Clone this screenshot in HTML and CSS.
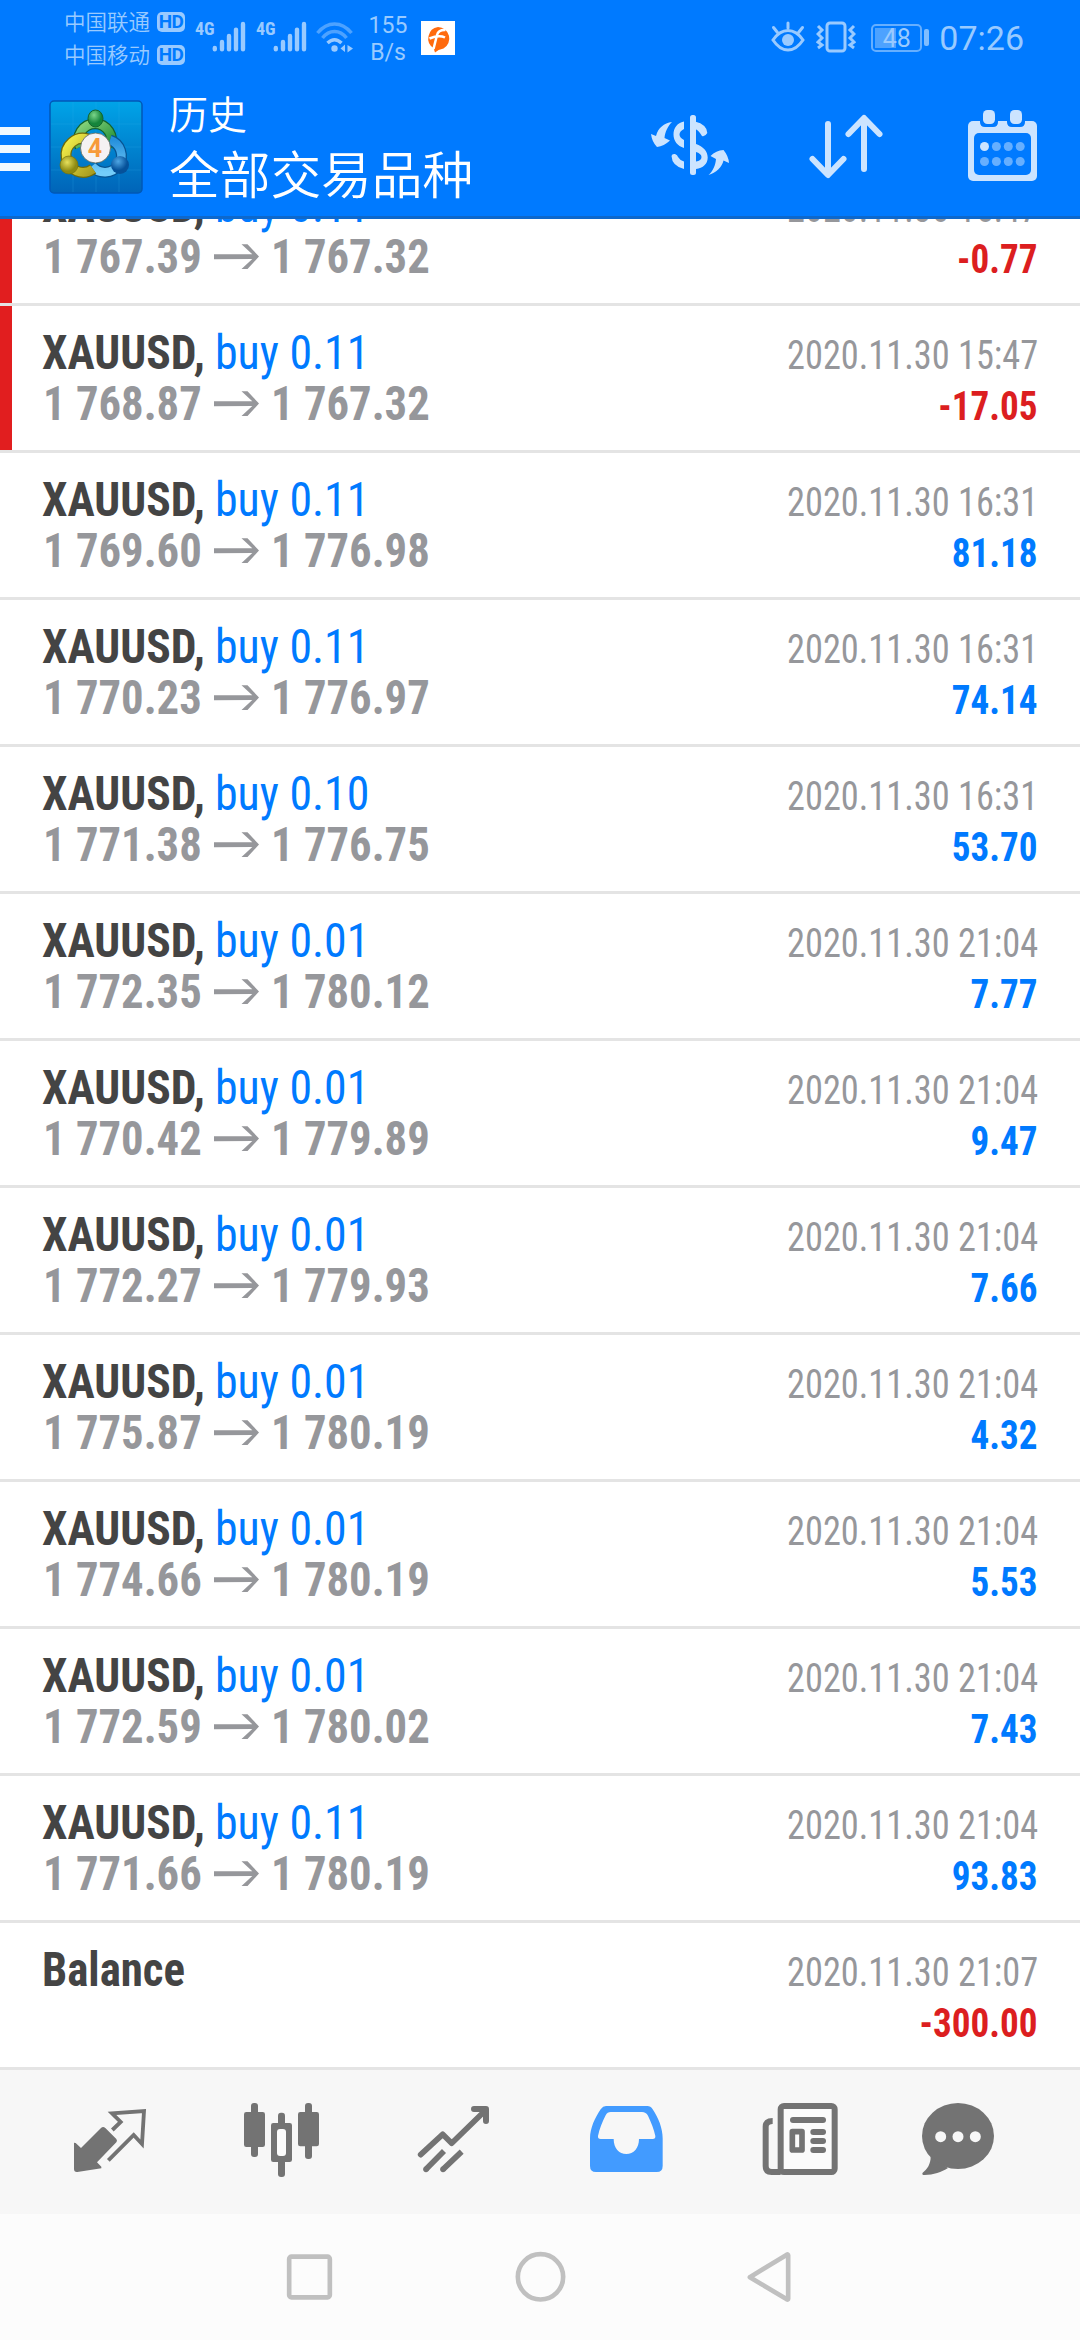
FILE: index.html
```html
<!DOCTYPE html>
<html lang="zh-CN">
<head>
<meta charset="utf-8">
<title>历史</title>
<link rel="stylesheet" href="styles.css">
</head>
<body>
<div class="screen">
<header class="top">
  <div class="status">
    <div class="carriers">
      <div class="carrier"><span>中国联通</span><b class="hd">HD</b></div>
      <div class="carrier"><span>中国移动</span><b class="hd">HD</b></div>
    </div>
    <div class="signal"><span class="gen">4G</span><svg width="34" height="32" viewBox="0 0 34 32"><path d="M2.8 27v1.2M10 21v7.2M17 15v13.2M24 8.600v19.600M31 3v25.200"/></svg></div>
    <div class="signal"><span class="gen">4G</span><svg width="34" height="32" viewBox="0 0 34 32"><path d="M2.800 27v1.200M10 21v7.200M17 15v13.200M24 8.600v19.600M31 3v25.200"/></svg></div>
    <svg class="wifi" width="38" height="32" viewBox="0 0 38 32" fill="none" stroke="#99caff" stroke-width="3.500">
      <path d="M1.500 12Q9 3 18.500 3T35.500 12M6.500 17Q11.500 10.500 18.500 10.500T30.500 17" stroke="#4da2ff"/>
      <path d="M11.500 22Q18.500 15.500 25.500 22"/>
      <circle cx="18.500" cy="27.500" r="3.200" fill="#99caff" stroke="none"/>
      <path d="M29 23.500v7.500L24.500 27.500zM31.500 24v7.500L37 27.500z" fill="#99caff" stroke="none"/>
    </svg>
    <div class="speed">155<br>B/s</div>
    <svg class="notice" width="34" height="34" viewBox="0 0 34 34">
      <rect width="34" height="34" fill="#fff"/>
      <path d="M17 6a11.500 11.500 0 0 1 5.500 21.500Q17 28.500 14 31.500L12.500 27A11.500 11.500 0 0 1 17 6z" fill="#ff6a0d"/>
      <path d="M12.500 28L16 14Q17.500 8.500 24.500 9M8.500 17.500Q18 13.500 24 16.500" fill="none" stroke="#fff" stroke-width="2.500"/>
    </svg>
    <div class="status-right">
      <svg width="34" height="32" viewBox="0 0 34 32" fill="none" stroke="#99caff" stroke-width="3">
        <path d="M2 19Q8.500 9.500 17 9.500T32 19Q25.500 29 17 29T2 19z"/><circle cx="17" cy="19" r="6" fill="#99caff" stroke="none"/>
        <path d="M17 2v5M2.500 6.500l4 5M31.500 6.500l-4 5" stroke-linecap="round"/>
      </svg>
      <svg class="vibrate" width="40" height="32" viewBox="0 0 40 32" fill="none" stroke="#99caff" stroke-width="3">
        <rect x="11" y="2" width="18" height="28" rx="3"/>
        <path d="M2 5l4 4-4 4 4 4-4 4 4 3-4 3M38 5l-4 4 4 4-4 4 4 4-4 3 4 3"/>
      </svg>
      <div class="battery"><span>48</span></div><i class="nub"></i>
      <span class="clock">07:26</span>
    </div>
  </div>
  <div class="appbar">
    <div class="menu"><i></i><i></i><i></i></div>
    <svg class="logo" width="94" height="94" viewBox="-1 -1 94 94">
      <defs>
        <linearGradient id="tile" x1="0" y1="0" x2="0" y2="1"><stop offset="0" stop-color="#00a4e8"/><stop offset="1" stop-color="#0064b8"/></linearGradient>
        <linearGradient id="green" x1="0" y1="0" x2="1" y2="1"><stop offset="0" stop-color="#8bd67d"/><stop offset="1" stop-color="#1b8a33"/></linearGradient>
        <linearGradient id="yellow" x1="0" y1="0" x2="1" y2="1"><stop offset="0" stop-color="#f4f04a"/><stop offset="1" stop-color="#a89c20"/></linearGradient>
        <linearGradient id="blue" x1="0" y1="0" x2="0" y2="1"><stop offset="0" stop-color="#2590dc"/><stop offset="1" stop-color="#75cdfa"/></linearGradient>
        <radialGradient id="gh" cx=".4" cy=".3"><stop offset="0" stop-color="#7bd58a"/><stop offset="1" stop-color="#15853b"/></radialGradient>
        <radialGradient id="yh" cx=".4" cy=".35"><stop offset="0" stop-color="#e6e05c"/><stop offset="1" stop-color="#8d8a12"/></radialGradient>
        <radialGradient id="bh" cx=".4" cy=".3"><stop offset="0" stop-color="#4fa6e4"/><stop offset="1" stop-color="#05519a"/></radialGradient>
      </defs>
      <rect width="92" height="92" rx="4" fill="url(#tile)" stroke="#0058b6" stroke-width="1.500"/>
      <path d="M23 1v90M46 1v90M69 1v90M1 23h90M1 46h90M1 69h90" stroke="#3bb4f0" stroke-width=".6" opacity=".35"/>
      <g fill="none">
        <path d="M30 46A16.500 16.500 0 1 1 60 46" stroke="#14632b" stroke-width="11"/><path d="M30 46A16.500 16.500 0 1 1 60 46" stroke="url(#green)" stroke-width="8.500"/>
        <path d="M60 39A16.500 16.500 0 1 1 42 65" stroke="#075492" stroke-width="11"/><path d="M60 39A16.500 16.500 0 1 1 42 65" stroke="url(#blue)" stroke-width="8.500"/>
        <path d="M38 38A17 17 0 1 0 43 68" stroke="#6f6a0a" stroke-width="11"/><path d="M38 38A17 17 0 1 0 43 68" stroke="url(#yellow)" stroke-width="8.500"/>
      </g>
      <ellipse cx="45.500" cy="17.500" rx="7.500" ry="8.500" fill="url(#gh)" stroke="#14632b"/>
      <circle cx="19" cy="64" r="9" fill="url(#yh)" stroke="#77740c" stroke-width=".7"/>
      <circle cx="70" cy="64" r="9" fill="url(#bh)"/>
      <circle cx="45.500" cy="47" r="15" fill="#f5f2f3" stroke="#5d6659" stroke-width=".8"/>
      <text x="45" y="56" class="four">4</text>
    </svg>
    <div class="titles"><div class="title">历史</div><div class="subtitle">全部交易品种</div></div>
    <div class="actions">
      <svg width="100" height="90" viewBox="640 100 100 90" fill="#cce4ff">
        <rect x="690" y="115" width="6" height="60" rx="2.500"/>
        <path d="M684 121.500C677 123 673.500 128 673.500 134.500S677.500 146 684 148V140C681 138.500 679.500 136.500 679.500 134.500S681 130.500 684 129ZM696 144C703 146.500 707.700 151 707.700 157.500S703 168 696 169V161.500C699.500 161 701.500 159.500 701.500 157S699 153 696 152Z"/>
        <path d="M671.500 156Q672 153.500 675 154Q677.500 155 678 157Q680 160.500 684 161.500V169Q672 166 671.500 156ZM695 121.500Q707 124.500 707.300 133Q705 137 702 136Q698.500 130 695 129Z"/>
        <path d="M672 122C664 123 658 128 656 136L651 134Q652 142 657 147Q664 146 670 140.500L664.500 138C665 132 668 126 672 122ZM708.500 175C713 171 715.500 165 716 159L710.500 156Q716 150.500 723.500 150Q728.500 156 729 163L723.500 160.500C722 167 716 173 708.500 175Z"/>
      </svg>
      <svg width="100" height="90" viewBox="796 100 100 90" fill="none" stroke="#cce4ff" stroke-width="6" stroke-linecap="round" stroke-linejoin="round"><path d="M828 124V174M812.500 159L828 175L843.500 159M864 169V119M848.500 134L864 118L879.500 134"/></svg>
      <svg width="100" height="90" viewBox="952 100 100 90" fill="#cce4ff">
        <rect x="968" y="121" width="69" height="60" rx="5"/>
        <rect x="974" y="133" width="57" height="42" rx="5" fill="#007aff"/>
        <path d="M980 120h18v2q0 5-5 5h-8q-5 0-5-5zM1007 120h18v2q0 5-5 5h-8q-5 0-5-5z" fill="#007aff"/>
        <rect x="983" y="110" width="12" height="14" rx="4.500"/><rect x="1010" y="110" width="12" height="14" rx="4.500"/>
        <circle cx="984.500" cy="146.500" r="4.500"/>
        <g fill="#66afff"><circle cx="996.400" cy="146.500" r="4.500"/><circle cx="1008.300" cy="146.500" r="4.500"/><circle cx="1020.200" cy="146.500" r="4.500"/><circle cx="984.500" cy="161.500" r="4.500"/><circle cx="996.400" cy="161.500" r="4.500"/><circle cx="1008.300" cy="161.500" r="4.500"/><circle cx="1020.200" cy="161.500" r="4.500"/></g>
      </svg>
    </div>
  </div>
</header>
<svg width="0" height="0" class="defs"><symbol id="arrow" viewBox="0 0 45 25"><path d="M0 10.300L38.300 10.300L27.500 .3H33.500L45 12.500L33.500 24.900H27.500L38.300 14.900L0 15.200Z" fill="#96979b"/></symbol></svg>
<main class="list">
  <div class="row loss"><div class="deal"><div class="head"><b>XAUUSD,</b> <span class="buy">buy 0.11</span></div><div class="prices"><span>1 767.39</span><svg class="arrow"><use href="#arrow"/></svg><span>1 767.32</span></div></div><div class="result"><div class="date">2020.11.30 15:47</div><div class="profit neg">-0.77</div></div></div>
  <div class="row loss"><div class="deal"><div class="head"><b>XAUUSD,</b> <span class="buy">buy 0.11</span></div><div class="prices"><span>1 768.87</span><svg class="arrow"><use href="#arrow"/></svg><span>1 767.32</span></div></div><div class="result"><div class="date">2020.11.30 15:47</div><div class="profit neg">-17.05</div></div></div>
  <div class="row"><div class="deal"><div class="head"><b>XAUUSD,</b> <span class="buy">buy 0.11</span></div><div class="prices"><span>1 769.60</span><svg class="arrow"><use href="#arrow"/></svg><span>1 776.98</span></div></div><div class="result"><div class="date">2020.11.30 16:31</div><div class="profit">81.18</div></div></div>
  <div class="row"><div class="deal"><div class="head"><b>XAUUSD,</b> <span class="buy">buy 0.11</span></div><div class="prices"><span>1 770.23</span><svg class="arrow"><use href="#arrow"/></svg><span>1 776.97</span></div></div><div class="result"><div class="date">2020.11.30 16:31</div><div class="profit">74.14</div></div></div>
  <div class="row"><div class="deal"><div class="head"><b>XAUUSD,</b> <span class="buy">buy 0.10</span></div><div class="prices"><span>1 771.38</span><svg class="arrow"><use href="#arrow"/></svg><span>1 776.75</span></div></div><div class="result"><div class="date">2020.11.30 16:31</div><div class="profit">53.70</div></div></div>
  <div class="row"><div class="deal"><div class="head"><b>XAUUSD,</b> <span class="buy">buy 0.01</span></div><div class="prices"><span>1 772.35</span><svg class="arrow"><use href="#arrow"/></svg><span>1 780.12</span></div></div><div class="result"><div class="date">2020.11.30 21:04</div><div class="profit">7.77</div></div></div>
  <div class="row"><div class="deal"><div class="head"><b>XAUUSD,</b> <span class="buy">buy 0.01</span></div><div class="prices"><span>1 770.42</span><svg class="arrow"><use href="#arrow"/></svg><span>1 779.89</span></div></div><div class="result"><div class="date">2020.11.30 21:04</div><div class="profit">9.47</div></div></div>
  <div class="row"><div class="deal"><div class="head"><b>XAUUSD,</b> <span class="buy">buy 0.01</span></div><div class="prices"><span>1 772.27</span><svg class="arrow"><use href="#arrow"/></svg><span>1 779.93</span></div></div><div class="result"><div class="date">2020.11.30 21:04</div><div class="profit">7.66</div></div></div>
  <div class="row"><div class="deal"><div class="head"><b>XAUUSD,</b> <span class="buy">buy 0.01</span></div><div class="prices"><span>1 775.87</span><svg class="arrow"><use href="#arrow"/></svg><span>1 780.19</span></div></div><div class="result"><div class="date">2020.11.30 21:04</div><div class="profit">4.32</div></div></div>
  <div class="row"><div class="deal"><div class="head"><b>XAUUSD,</b> <span class="buy">buy 0.01</span></div><div class="prices"><span>1 774.66</span><svg class="arrow"><use href="#arrow"/></svg><span>1 780.19</span></div></div><div class="result"><div class="date">2020.11.30 21:04</div><div class="profit">5.53</div></div></div>
  <div class="row"><div class="deal"><div class="head"><b>XAUUSD,</b> <span class="buy">buy 0.01</span></div><div class="prices"><span>1 772.59</span><svg class="arrow"><use href="#arrow"/></svg><span>1 780.02</span></div></div><div class="result"><div class="date">2020.11.30 21:04</div><div class="profit">7.43</div></div></div>
  <div class="row"><div class="deal"><div class="head"><b>XAUUSD,</b> <span class="buy">buy 0.11</span></div><div class="prices"><span>1 771.66</span><svg class="arrow"><use href="#arrow"/></svg><span>1 780.19</span></div></div><div class="result"><div class="date">2020.11.30 21:04</div><div class="profit">93.83</div></div></div>
  <div class="row"><div class="deal"><div class="head balance"><b>Balance</b></div></div><div class="result"><div class="date">2020.11.30 21:07</div><div class="profit neg">-300.00</div></div></div>
</main>
<nav class="tabs">
  <svg viewBox="72 30 516 432"><path d="M222 248L227 249L243 264L303 204Q309 198 316 204L349 237Q353 242 349 247L291 307L304 320V325L232 336Q222 337 222 327Z"/><path d="M337 210L362 186L336 160L432 153L426 252L401 225L325 301" fill="none" stroke="#737373" stroke-width="11.500" stroke-linejoin="miter"/></svg>
  <svg viewBox="588 30 516 432"><rect x="753" y="129" width="21" height="162" rx="9"/><rect x="732" y="156" width="63" height="105" rx="7"/><rect x="834" y="158" width="21" height="193" rx="9"/><rect x="813" y="189" width="63" height="117" rx="7"/><rect x="831" y="207" width="27" height="81" rx="9" fill="#fbfbfb"/><rect x="915" y="129" width="21" height="168" rx="9"/><rect x="894" y="156" width="63" height="103" rx="7"/></svg>
  <svg viewBox="24 30 516 432"><g fill="none" stroke="#737373" stroke-width="17"><path d="M182 284L248 223L275 250L375 152" stroke-linecap="round" stroke-linejoin="round"/><path d="M342 147H378V183" stroke-width="18" stroke-linecap="round" stroke-linejoin="round"/><path d="M198 328L252 273M249 328L305 275"/></g><circle cx="198" cy="328" r="8.500"/><circle cx="249" cy="328" r="8.500"/></svg>
  <svg viewBox="540 30 516 432"><path fill="#429bff" fill-rule="evenodd" d="M738 138H862Q872 138 878 148C895 173 908 205 908 235V318Q908 336 890 336H708Q690 336 690 318V235C690 205 705 173 722 148Q729 138 738 138ZM752 156Q742 156 737 166C727 186 718 208 714 228Q713 237 722 237H761C761 265 777 282 799 282S837 265 837 237H878Q887 237 886 228C882 208 873 186 864 167Q858 156 846 156Z"/></svg>
  <svg viewBox="-24 30 516 432"><path d="M158 183Q137 183 137 200V318Q137 336 155 336H182" fill="none" stroke="#737373" stroke-width="18"/><rect x="182" y="138" width="162" height="198" rx="10" fill="#fbfbfb" stroke="#737373" stroke-width="18"/><rect x="210" y="171" width="108" height="18" rx="9"/><rect x="217" y="215" width="29" height="55" fill="none" stroke="#737373" stroke-width="17" stroke-linejoin="round"/><rect x="271" y="207" width="47" height="18" rx="9"/><rect x="271" y="234" width="47" height="18" rx="9"/><rect x="271" y="261" width="47" height="18" rx="9"/></svg>
  <svg viewBox="492 30 516 432"><ellipse cx="714" cy="228" rx="108" ry="99"/><path d="M632 290C632 312 622 327 608 338Q604 345 614 345C640 345 665 336 684 324Z"/><g fill="#f7f7f7"><circle cx="662" cy="230" r="16.500"/><circle cx="714" cy="230" r="16.500"/><circle cx="766" cy="230" r="16.500"/></g></svg>
</nav>
<nav class="sysnav">
  <svg viewBox="580.5 462 693 378"><rect x="866" y="590" width="122" height="122" rx="7"/></svg>
  <svg viewBox="193.5 462 693 378"><circle cx="540" cy="650.500" r="68"/></svg>
  <svg viewBox="-193.5 462 693 378"><path d="M88 651.500L199 584Q203 582 203 586V716Q203 720 199 718Z"/></svg>
</nav>
</div>
</body>
</html>
```
FILE: styles.css
```css
* { box-sizing: border-box; }
body { margin: 0; background: #fff; }
svg { display: block; flex: none; }
.defs { position: absolute; }
.screen {
  width: 1080px;
  height: 2340px;
  display: flex;
  flex-direction: column;
  overflow: hidden;
  font-family: Roboto, "Noto Sans CJK SC", sans-serif;
}
.top { flex: none; height: 219px; background: #007aff; border-bottom: 3px solid #0d68cc; color: #fff; }
.status { height: 75px; display: flex; align-items: flex-start; padding: 0 56px 0 64px; color: #99caff; }
.carriers { width: 131px; padding-top: 6px; font-family: "Noto Sans CJK SC", sans-serif; font-size: 21.500px; line-height: 30px; font-weight: 350; }
.carrier { height: 32.500px; display: flex; align-items: center; gap: 7px; white-space: nowrap; }
.carrier span { padding-bottom: 2px; }
.hd { width: 28px; height: 20px; border-radius: 5px; background: #99caff; color: #007aff; font: 700 19px/20px Roboto, sans-serif; text-align: center; letter-spacing: -.5px; }
.signal { display: flex; width: 61px; padding-top: 21px; }
.signal path { stroke: #99caff; stroke-width: 4.400; stroke-linecap: round; fill: none; }
.gen { width: 17px; font: 700 18px/20px "Roboto Condensed", Roboto, sans-serif; margin-top: -2px; }
.wifi { margin: 21px 0 0 -1px; }
.speed { width: 52px; margin-left: 8px; padding-top: 11.500px; text-align: center; font-size: 23px; line-height: 27px; }
.notice { margin: 21px 0 0 7px; }
.status-right { margin-left: auto; display: flex; padding-top: 21px; }
.vibrate { margin-left: 11px; }
.battery { width: 51px; height: 28px; margin: 3px 2px 0 15px; border: 2px solid #66afff; border-radius: 5px; background: linear-gradient(#4da2ff, #4da2ff) 2px 2px / 21px 20px no-repeat; font-size: 25px; line-height: 25px; text-align: center; }
.nub { width: 5px; height: 17px; margin-top: 8px; border-radius: 2px; background: #80bdff; }
.clock { margin-left: 10px; font-size: 34px; line-height: 35px; }
.appbar { height: 141px; display: flex; }
.menu { width: 30px; padding-top: 52px; display: flex; flex-direction: column; gap: 10px; }
.menu i { height: 8px; background: #eff8ff; }
.logo { margin: 25px 0 0 19px; }
.four { font: 700 25px Roboto, sans-serif; fill: #f79a3a; text-anchor: middle; }
.titles { margin-left: 26px; font-family: "Noto Sans CJK SC", sans-serif; font-weight: 350; white-space: nowrap; }
.title { font-size: 39px; line-height: 50px; margin-top: 12px; }
.subtitle { font-size: 50.700px; line-height: 64px; margin-top: 3px; }
.actions { margin: 25px 28px 0 auto; display: flex; gap: 56px; }
.list { flex: none; height: 1851px; overflow: hidden; display: flex; flex-direction: column; justify-content: flex-end; }
.row { flex: none; height: 147px; display: flex; justify-content: space-between; border-bottom: 3px solid #e4e4e4; padding: 21px 42px 0 42px; font-family: "Roboto Condensed", Roboto, sans-serif; white-space: nowrap; line-height: 51px; }
.loss { background: linear-gradient(#e11e1f, #e11e1f) 0 0 / 12px 144px no-repeat; }
.deal { font-size: 48px; color: #444; }
.head { display: flex; }
.head b { width: 172.500px; transform: scaleX(.948); transform-origin: left; }
.balance b { transform: scaleX(.935); }
.buy { color: #007aff; transform: scaleX(.955); transform-origin: left; }
.prices { display: flex; padding-left: 1px; font-weight: 700; color: #96979b; }
.prices span { width: 171px; transform: scaleX(.931); transform-origin: left; }
.arrow { width: 45px; height: 25px; margin: 12.500px 11.500px 0 0; }
.result { padding-top: 3px; font-size: 40px; text-align: right; }
.date { color: #96979b; transform: translateX(.6px) scaleX(.908); transform-origin: right; }
.profit { font-weight: 700; color: #007aff; transform: scaleX(.928); transform-origin: right; }
.neg { color: #dc1e20; }
.tabs { flex: none; height: 144px; padding: 0 24px; display: flex; background: #f7f7f7; }
.tabs svg { width: 172px; height: 144px; fill: #737373; }
.sysnav { flex: none; height: 126px; display: flex; justify-content: center; background: #fcfcfc; }
.sysnav svg { width: 231px; height: 126px; fill: none; stroke: #c0c0c0; stroke-width: 14; stroke-linejoin: round; }
```
